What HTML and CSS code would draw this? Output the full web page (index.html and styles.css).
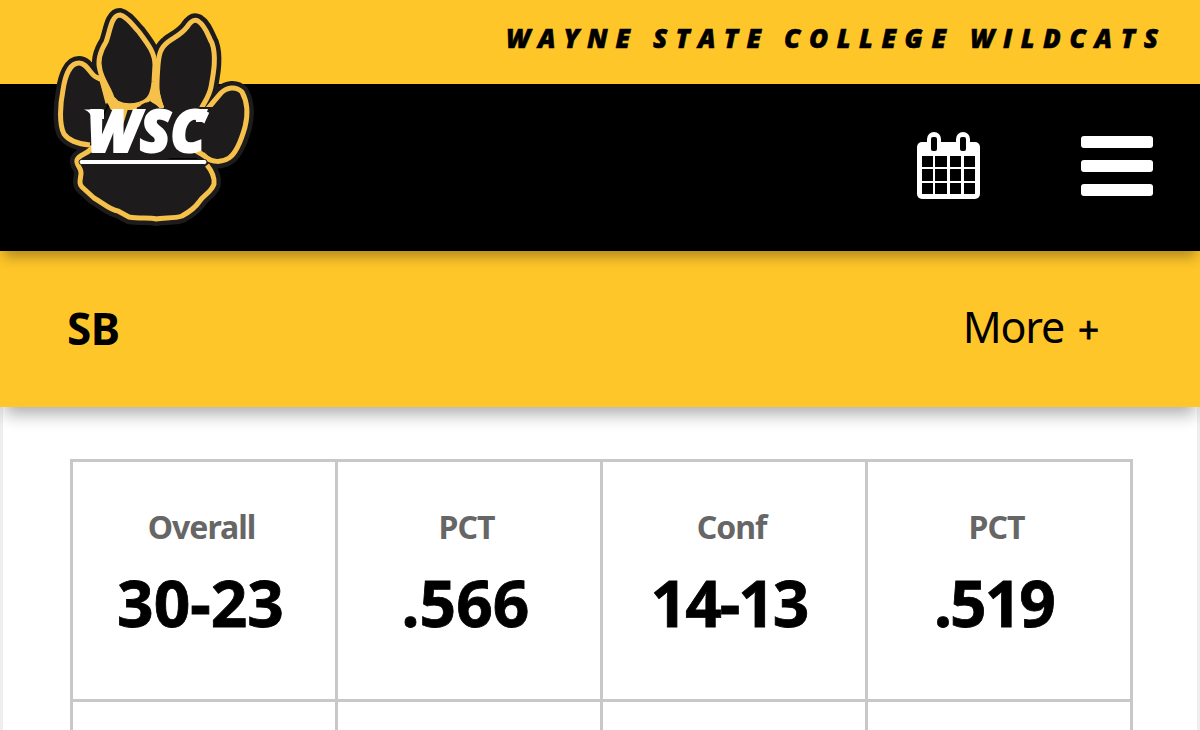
FILE: index.html
```html
<!DOCTYPE html>
<html lang="en">
<head>
    <meta charset="UTF-8">
    <meta name="viewport" content="width=device-width, initial-scale=1.0">
    <title>Wayne State College Wildcats</title>
    <link rel="stylesheet" href="styles.css">
</head>
<body>
    <header class="header">
        <div class="topbar">
            <svg class="wordmark" width="660" height="40" viewBox="503 18 660 40">
                <text x="506" y="47.500" textLength="124">WAYNE</text>
                <text x="653" y="47.500" textLength="108">STATE</text>
                <text x="784" y="47.500" textLength="162">COLLEGE</text>
                <text x="970" y="47.500" textLength="188">WILDCATS</text>
            </svg>
        </div>
        <nav class="navbar">
            <a class="calendar" href="#" aria-label="Calendar">
                <svg width="64" height="68" viewBox="0 0 64 68">
                    <rect x="0" y="10" width="63" height="57" rx="5" fill="#fff"/>
                    <rect x="10" y="0" width="14" height="24" rx="7" fill="#fff"/>
                    <rect x="39" y="0" width="14" height="24" rx="7" fill="#fff"/>
                    <rect x="14" y="5" width="6" height="14" rx="2"/>
                    <rect x="43" y="5" width="6" height="14" rx="2"/>
                    <path d="M5 24h11v11H5zM18 24h12v11H18zM33 24h11v11H33zM47 24h11v11H47zM5 37h11v12H5zM18 37h12v12H18zM33 37h11v12H33zM47 37h11v12H47zM5 51h11v11H5zM18 51h12v11H18zM33 51h11v11H33zM47 51h11v11H47z"/>
                </svg>
            </a>
            <a class="menu" href="#" aria-label="Menu">
                <span></span>
                <span></span>
                <span></span>
            </a>
        </nav>
        <svg class="logo" width="220" height="240" viewBox="40 0 220 240">
            <defs>
                <g id="paw">
                    <path d="M90 145C78 144 69 141 64 134C59 124 60 105 63 90C65 76 70 63 79 63C87 63 90 74 96 77L102 80L108 103"/>
                    <path d="M140 104Q128 108 117 103L112 98C110 90 102 80 100 70C97 60 101 50 106 42C110 32 111 15 120 15C128 17 133 26 139 32C148 44 155 53 155 65L154 82C153 92 151 101 140 104"/>
                    <path d="M162 108C155 95 157 80 158 65C159 55 160 48 168 42C175 37 182 34 187 27C191 21 194 19 198 21C206 26 208 36 212 43C217 57 213 76 211 87C209 97 205 101 201 109"/>
                    <path d="M206 111C209 107 215 100 221 93C227 87 236 86 242 92C248 103 248 115 245 127C241 141 235 154 229 158C221 163 212 162 207 158L198 150"/>
                    <path d="M93 146C90 154 79 154 77 160C76 166 82 168 81 174C80 181 79 184 82 187L94 198C103 203 110 210 118 211L129 217C140 219 149 217 156 219C163 217 174 219 182 216C191 211 195 208 199 202C204 194 211 193 214 184C215 176 211 170 207 165"/>
                </g>
            </defs>
            <use href="#paw" class="paw-edge"/>
            <use href="#paw" class="paw"/>
            <path class="dark" d="M108 107H201L213 107L207 150L197 158H92V142Z"/>
            <path class="gold" d="M98 75L104 78L113 98L118 103L138 106L136 110H111L105 98Z"/>
            <path class="gold" d="M155 74H158L159 90L164 108H159L150 101L153 90Z"/>
            <path class="dark" d="M136 112Q141 102 149 102Q157 103 162 112Z"/>
            <path class="gold" d="M121 109h7l-5 16z"/>
            <path class="gold" d="M197 147L208 156V161L193 152Z"/>
            <path class="serif" d="M84 109.500H104V119H92Q91 112 84 109.500Z"/>
            <text class="letters" x="87" y="152" textLength="119" lengthAdjust="spacingAndGlyphs">WSC</text>
            <path class="serif" d="M195 109H208L203 122H196Z"/>
            <rect class="rule" x="79" y="159.500" width="128" height="5" rx="2.500"/>
        </svg>
    </header>

    <div class="subnav">
        <strong class="sport">SB</strong>
        <a class="more" href="#">More <span class="plus">+</span></a>
    </div>

    <main class="content">
        <div class="stats">
            <div class="stat"><span class="label">Overall</span><span class="value">30-23</span></div>
            <div class="stat"><span class="label">PCT</span><span class="value">.566</span></div>
            <div class="stat"><span class="label">Conf</span><span class="value tight">14-13</span></div>
            <div class="stat"><span class="label">PCT</span><span class="value tight">.519</span></div>
            <div class="stat"></div>
            <div class="stat"></div>
            <div class="stat"></div>
            <div class="stat"></div>
        </div>
    </main>
</body>
</html>
```
FILE: styles.css
```css
* {
    box-sizing: border-box;
}
body {
    margin: 0;
    height: 730px;
    overflow: hidden;
    background: #fff;
    color: #000;
    font-family: "Noto Sans", sans-serif;
}
a {
    color: inherit;
    text-decoration: none;
}
.header {
    position: relative;
    z-index: 2;
    box-shadow: 0 10px 12px -4px rgba(0, 0, 0, 0.3);
}
.topbar {
    height: 84px;
    padding: 18px 37px 0 0;
    display: flex;
    justify-content: flex-end;
    background: #ffc629;
}
.wordmark text {
    font: italic 800 26px "Open Sans", sans-serif;
    stroke: #000;
    stroke-width: 0.6px;
}
.navbar {
    height: 167px;
    padding: 0 47px 4px 0;
    display: flex;
    justify-content: flex-end;
    align-items: center;
    gap: 100px;
    background: #000;
}
.calendar svg {
    display: block;
}
.menu {
    width: 72px;
    display: flex;
    flex-direction: column;
    gap: 12px;
}
.menu span {
    height: 12px;
    border-radius: 3px;
    background: #fff;
}
.logo {
    position: absolute;
    left: 40px;
    top: 0;
}
.paw-edge {
    fill: #1d1b1c;
    stroke: #1d1b1c;
    stroke-width: 14px;
    stroke-linejoin: round;
}
.paw {
    fill: #1d1b1c;
    stroke: #f6c14b;
    stroke-width: 5px;
    stroke-linejoin: round;
}
.gold {
    fill: #f6c14b;
}
.dark {
    fill: #1d1b1c;
}
.letters {
    font: italic 800 58px "Open Sans", sans-serif;
    fill: #fff;
    stroke: #fff;
    stroke-width: 2px;
}
.serif {
    fill: #fff;
}
.rule {
    fill: #fff;
    stroke: #1d1b1c;
}
.subnav {
    position: relative;
    z-index: 1;
    height: 156px;
    padding: 0 102px 2px 67px;
    display: flex;
    justify-content: space-between;
    align-items: center;
    background: #ffc629;
    box-shadow: 0 12px 16px -5px rgba(0, 0, 0, 0.33);
    font-size: 43px;
    line-height: 60px;
}
.sport {
    font-size: 44px;
    letter-spacing: -0.5px;
}
.more {
    letter-spacing: -1.2px;
}
.plus {
    margin-left: 4px;
    font-size: 37px;
    -webkit-text-stroke: 0.8px #000;
}
.content {
    height: 323px;
    overflow: hidden;
    padding: 52px 64px 0 67px;
    border: solid #eee;
    border-width: 0 3px;
}
.stats {
    display: grid;
    grid-template-columns: repeat(4, 265px);
    grid-auto-rows: 240px;
    width: 1063px;
    border: solid #c8c8c8;
    border-width: 3px 0 0 3px;
}
.stat {
    padding: 44px 5px 0 0;
    display: flex;
    flex-direction: column;
    align-items: center;
    border: solid #c8c8c8;
    border-width: 0 3px 3px 0;
    font-weight: 700;
}
.label {
    color: #666;
    font-size: 32px;
    line-height: 42px;
    letter-spacing: -1px;
}
.value {
    margin: 17px 2px 0 0;
    font-size: 64px;
    line-height: 76px;
    -webkit-text-stroke: 0.8px #000;
}
.tight {
    margin-right: 5px;
    letter-spacing: -2px;
}
```
